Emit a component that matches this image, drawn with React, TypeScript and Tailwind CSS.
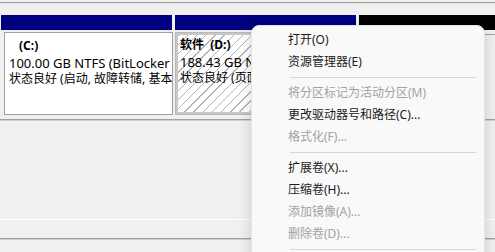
const font = { fontFamily: '"Noto Sans", "Noto Sans CJK SC", sans-serif' };

type Item = { label: string; disabled?: boolean } | 'sep';

const MENU: Item[] = [
  { label: '打开(O)' },
  { label: '资源管理器(E)' },
  'sep',
  { label: '将分区标记为活动分区(M)', disabled: true },
  { label: '更改驱动器号和路径(C)...' },
  { label: '格式化(F)...', disabled: true },
  'sep',
  { label: '扩展卷(X)...' },
  { label: '压缩卷(H)...' },
  { label: '添加镜像(A)...', disabled: true },
  { label: '删除卷(D)...', disabled: true },
  'sep',
];

function ContextMenu() {
  return (
    <div className="absolute left-[251px] top-[25px] w-[234px] h-[260px] rounded-lg bg-[#f9f9f9] border border-[#e4e4e4] shadow-[0_4px_14px_rgba(0,0,0,0.16)] pt-[3px]">
      {MENU.map((item, i) =>
        item === 'sep' ? (
          <div key={i} className="h-[9px] flex items-center pl-[38px] pr-[8px]">
            <div className="h-px w-full bg-[#d6d6d6]" />
          </div>
        ) : (
          <div
            key={i}
            className={`h-[22px] flex items-center pl-[36px] text-[12px] ${item.disabled ? 'text-[#a2a2a2]' : 'text-[#1b1b1b]'}`}
          >
            {item.label}
          </div>
        )
      )}
    </div>
  );
}

export default function App() {
  return (
    <div className="relative w-[495px] h-[252px] overflow-hidden bg-[#f0f0f0] text-[12px] text-black" style={font}>
      <div className="h-[2px]" />
      <div className="h-px bg-[#a0a0a0]" />
      <div className="h-px bg-[#e3e3e3]" />
      <div className="h-[11px]" />

      {/* headers */}
      <div className="flex h-[15px] gap-[3px] pl-px">
        <div className="w-[171px] bg-[#000080]" />
        <div className="w-[181px] bg-[#000080]" />
        <div className="flex-1 bg-black" />
      </div>

      {/* partitions */}
      <div className="flex h-[87px] pt-[2px] gap-[2px]">
        <div className="ml-[4px] w-[169px] h-[83px] border border-[#a0a0a0] bg-white pl-[4px] pt-[5px] leading-[16.5px] whitespace-nowrap overflow-hidden">
          <div className="font-bold pl-[10px]">(C:)</div>
          <div className="text-[13px]">100.00 GB NTFS (BitLocker</div>
          <div>状态良好 (启动, 故障转储, 基本</div>
        </div>
        <div className="w-[182px] h-[83px] border border-[#b8b8b8] bg-[#c8c8c8] p-[2px]">
          <div className="h-full bg-white bg-[repeating-linear-gradient(135deg,#b4b4b4_0_1px,#ffffff_1px_6.5px)] pl-[2px] pt-[2px] leading-[16.5px] whitespace-nowrap overflow-hidden">
            <div className="font-bold">软件&nbsp;&nbsp;(D:)</div>
            <div className="text-[13px]">188.43 GB NTFS</div>
            <div>状态良好 (页面文件</div>
          </div>
        </div>
        <div className="flex-1 flex flex-col">
          <div className="h-[2px]" />
          <div className="h-px bg-[#a0a0a0]" />
        </div>
      </div>

      <div className="h-[2px]" />
      <div className="h-px bg-[#a0a0a0]" />
      <div className="h-px bg-[#d0d0d0]" />
      <div className="h-[98px]" />
      <div className="h-px bg-white" />
      <div className="h-[18px]" />
      <div className="h-px bg-[#a0a0a0]" />
      <div className="h-px bg-[#d0d0d0]" />

      <ContextMenu />
    </div>
  );
}
